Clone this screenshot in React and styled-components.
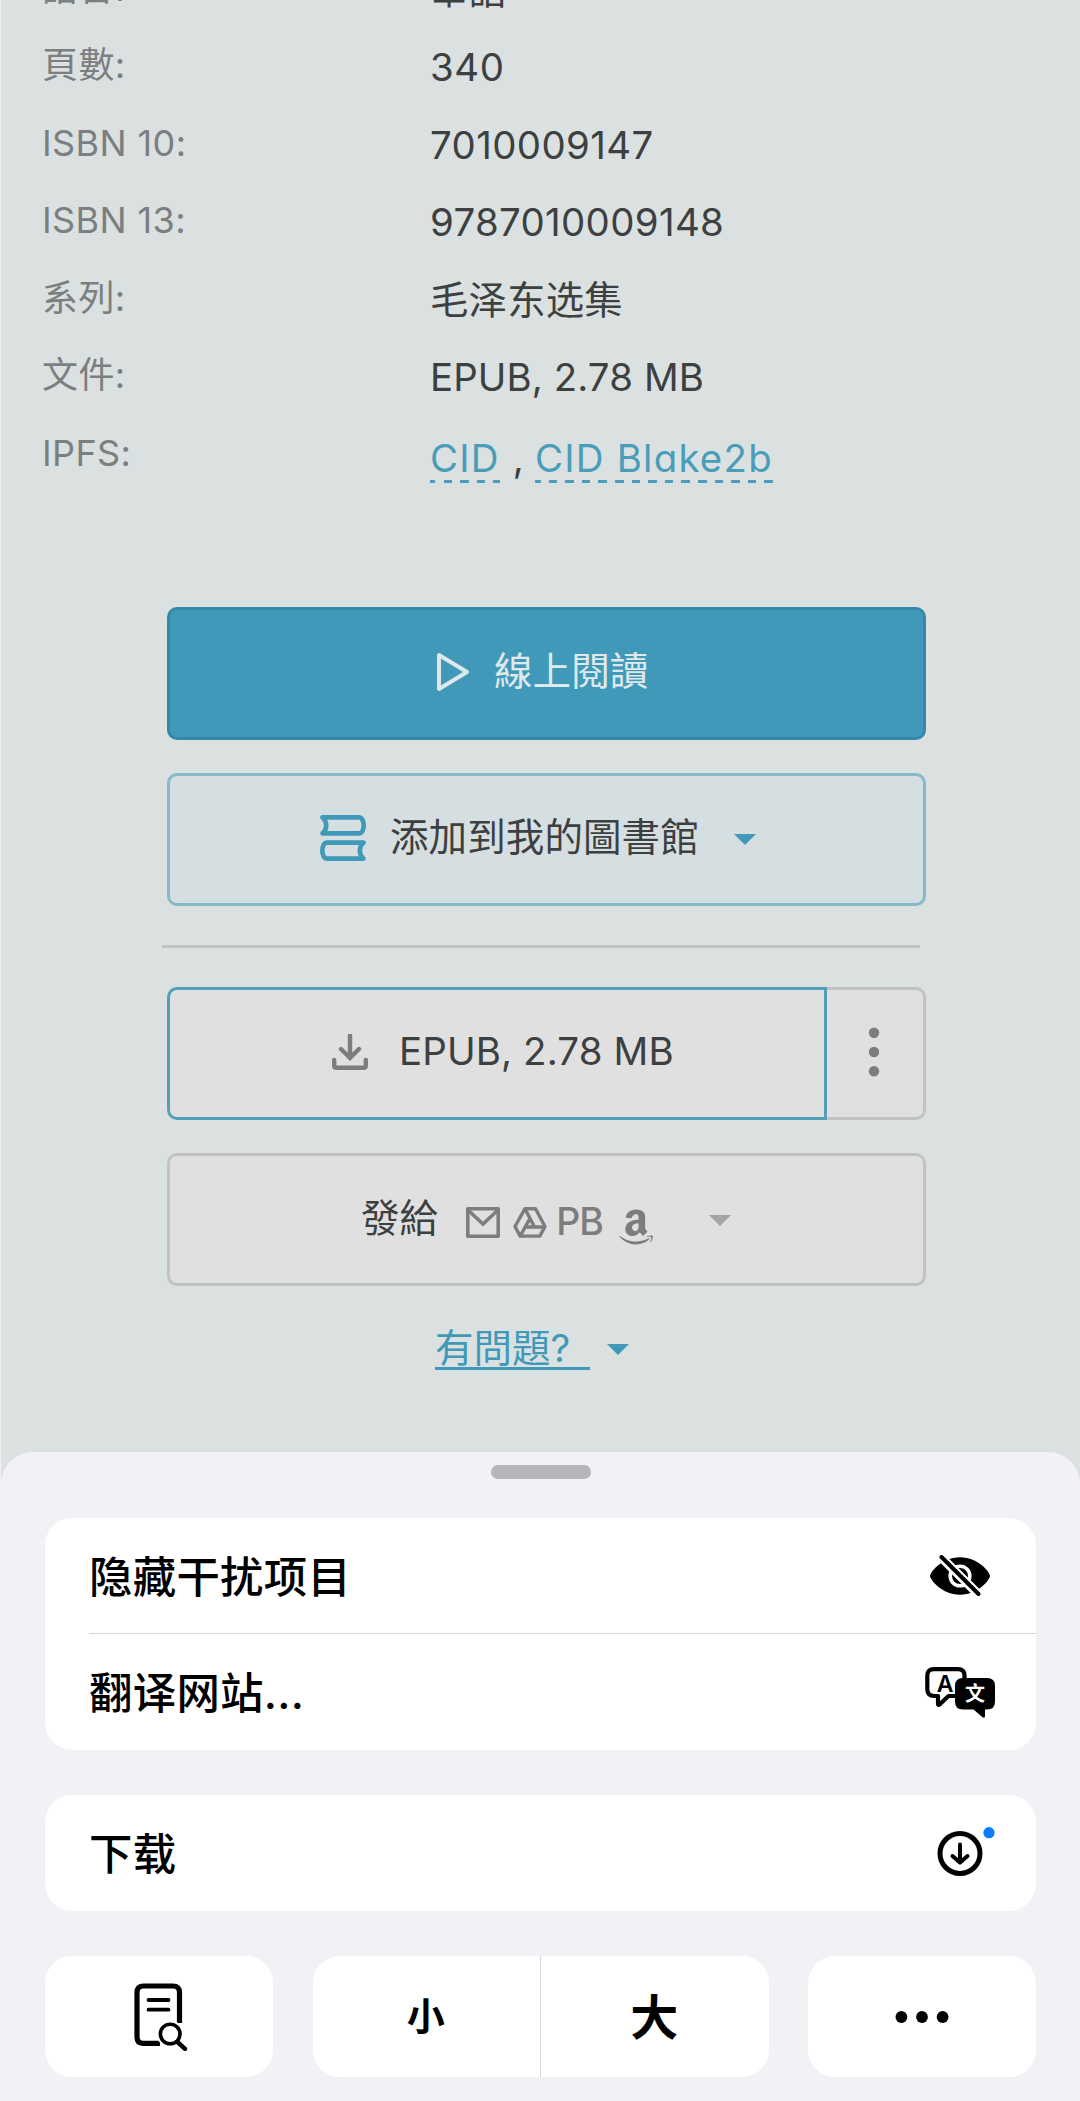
import React from 'react';
import styled, { createGlobalStyle } from 'styled-components';
import { FaAmazon } from 'react-icons/fa';

const GlobalStyle = createGlobalStyle`
  * {
    box-sizing: border-box;
  }
  body {
    margin: 0;
    background-color: #dbe1e1;
    font-family: Inter, "Noto Sans CJK TC", sans-serif;
  }
`;

const PageContainer = styled.div`
  display: flex;
  flex-direction: column;
  width: 1080px;
  height: 2101px;
  overflow: hidden;
  border-left: 1px solid #eef1f1;
  background-color: #dbe1e1;
`;

const BookSection = styled.section`
  height: 1452px;
  flex: none;
  overflow: hidden;
`;

const InfoList = styled.div`
  margin-top: -48.5px;
  padding-left: 41px;
`;

const InfoRow = styled.div`
  display: grid;
  grid-template-columns: 388px 1fr;
  height: 77.6px;
  white-space: nowrap;
`;

const Label = styled.div`
  color: #7b7f7f;
  font-size: 36px;
  line-height: 73px;
  letter-spacing: 0.4px;
`;

const Value = styled.div`
  color: #3d4040;
  font-size: 38.4px;
  line-height: ${(props) => (props.$links ? '82px' : '77.6px')};
  letter-spacing: ${(props) => props.$spacing || '0'};
  font-feature-settings: "cv11";
`;

const DashedLink = styled.a`
  display: inline-block;
  height: 47px;
  line-height: 45px;
  color: #4a9db9;
  letter-spacing: 1.25px;
  background: repeating-linear-gradient(90deg, #4a9db9 0 8.5px, transparent 8.5px 16.6px) -3px 100% / calc(100% + 3px) 3px no-repeat;
`;

const Comma = styled.span`
  margin: 0 11px 0 13px;
`;

const Actions = styled.div`
  display: flex;
  flex-direction: column;
  width: 759px;
  margin: 112.5px 0 0 166px;
`;

const Button = styled.button`
  display: flex;
  align-items: center;
  height: 133px;
  width: 100%;
  margin: 0 0 33px;
  padding: 0 0 3px ${(props) => props.$left};
  border: 3px solid ${(props) => props.$border};
  border-radius: 10px;
  background-color: ${(props) => props.$bg};
  color: ${(props) => props.$color || '#3d4040'};
  font-family: inherit;
  font-size: 38.5px;
  white-space: nowrap;
  svg {
    flex: none;
  }
`;

const ButtonText = styled.span`
  line-height: 50px;
  margin-left: ${(props) => props.$gap || '0'};
  margin-top: ${(props) => props.$top || '-3px'};
  letter-spacing: 0.1px;
`;

const Separator = styled.hr`
  width: 758px;
  height: 3px;
  margin: 6px 0 39px -5px;
  border: none;
  background-color: #c1c5c6;
`;

const SplitButton = styled.div`
  display: flex;
  height: 133px;
  margin-bottom: 33px;
`;

const DownloadButton = styled(Button)`
  width: 660px;
  margin: 0;
  border-radius: 10px 0 0 10px;
`;

const MoreButton = styled(Button)`
  width: 99px;
  margin: 0;
  border-left: none;
  border-radius: 0 10px 10px 0;
`;

const Caret = styled.span`
  width: 0;
  height: 0;
  margin-left: ${(props) => props.$gap};
  margin-top: ${(props) => props.$top || '0'};
  border: 11px solid transparent;
  border-top-color: ${(props) => props.$color || '#4099b8'};
  border-bottom: none;
`;

const SendIcons = styled.span`
  display: flex;
  align-items: flex-start;
  height: 40px;
  gap: 13px;
  margin: 17px 0 0 28px;
  color: #7d7d7d;
`;

const PocketBook = styled.span`
  width: 45px;
  margin: 0 2px 0 -4px;
  font-size: 37.5px;
  font-weight: 500;
  line-height: 29px;
  letter-spacing: -1px;
`;

const Question = styled.div`
  display: flex;
  align-items: center;
  margin: 6px 0 0 268px;
  color: #4099b8;
  font-size: 38.5px;
`;

const QuestionLink = styled.a`
  width: 155px;
  height: 45px;
  line-height: 46px;
  border-bottom: 3px solid #4099b8;
  white-space: nowrap;
`;

const Sheet = styled.section`
  flex: 1;
  display: flex;
  flex-direction: column;
  padding: 13px 44px 0 44px;
  border-radius: 32px 32px 0 0;
  background-color: #f2f1f6;
  color: #000;
  font-family: Inter, "Noto Sans CJK SC", sans-serif;
`;

const Handle = styled.div`
  align-self: center;
  width: 100px;
  height: 14px;
  margin-bottom: 39px;
  border-radius: 7px;
  background-color: #b6b5bb;
`;

const Card = styled.div`
  margin-bottom: 45px;
  border-radius: 27px;
  background-color: #fff;
`;

const MenuRow = styled.div`
  display: flex;
  align-items: center;
  justify-content: space-between;
  height: 116px;
  margin-left: 44px;
  padding-right: ${(props) => props.$right};
  border-bottom: ${(props) => (props.$line ? '1px solid #d6d6d8' : 'none')};
  font-size: 43.4px;
  font-weight: 500;
`;

const MenuText = styled.span`
  padding-bottom: 4px;
  letter-spacing: 0.3px;
`;

const Toolbar = styled.div`
  display: grid;
  grid-template-columns: 228px 456px 228px;
  justify-content: space-between;
  height: 121px;
`;

const ToolButton = styled.div`
  display: flex;
  align-items: center;
  justify-content: center;
  padding-left: ${(props) => props.$nudge || '0'};
  border-radius: 27px;
  background-color: #fff;
`;

const SizeHalf = styled.div`
  display: flex;
  flex: 1;
  height: 100%;
  align-items: center;
  justify-content: center;
  padding: 0 1px 6px 0;
  border-left: ${(props) => (props.$divided ? '1px solid #d6d6d8' : 'none')};
  font-size: ${(props) => props.$size};
  font-weight: 700;
`;

const PlayIcon = () => (
  <svg width="34" height="40" viewBox="0 0 34 40" fill="none" stroke="#dfe9ec" strokeWidth="4" strokeLinejoin="round">
    <path d="M3 3 31 20 3 37Z" />
  </svg>
);

const BooksIcon = () => (
  <svg width="46" height="46" viewBox="0 0 46 46" fill="none" stroke="#4099b8" strokeWidth="4.600" strokeLinejoin="round">
    <path d="M2.500 2.400H39c3 0 4.700 4 4.700 8s-1.700 8-4.700 8H2.500c5-4.500 5-11.500 0-16Z" />
    <path d="M43.500 27.600H7c-3 0-4.700 4-4.700 8s1.700 8 4.700 8h36.500c-5-4.500-5-11.500 0-16Z" />
  </svg>
);

const DownloadIcon = () => (
  <svg width="36" height="36" viewBox="0 0 36 36" fill="none" stroke="#7d7d7d" strokeWidth="4.400">
    <path d="M2.200 26v5.500q0 2.300 2.300 2.300h27q2.300 0 2.300-2.300V26" strokeLinecap="round" />
    <path d="M18 1.500v22M9 15l9 8.800 9-8.800" strokeLinecap="round" />
  </svg>
);

const MailIcon = () => (
  <svg width="34" height="31" viewBox="0 0 34 31" fill="none" stroke="currentColor" strokeWidth="3.600">
    <path d="M1.800 1.800h30.400v27.400H1.800Z" strokeLinejoin="round" />
    <path d="M2 3l15 14L32 3" />
  </svg>
);

const DriveIcon = () => (
  <svg width="34" height="31" viewBox="0 0 34 31" fill="none" stroke="currentColor" strokeWidth="3.400" strokeLinejoin="round">
    <path d="M12 1.700h10.500L32 19.500l-5.200 9.600H7.200L2 19.500Z" />
    <path d="M12 1.700 21.500 20M7.200 29.100 17 11.200M12.300 20H32" />
  </svg>
);

const EyeOffIcon = () => (
  <svg width="60" height="42" viewBox="0 0 60 42" fill="none">
    <path d="M0 21C0 18 11 2.300 30 2.300S60 18 60 21 49 39.700 30 39.700 0 24 0 21Z" fill="#000" />
    <circle cx="30" cy="21" r="9.800" stroke="#fff" strokeWidth="3.600" />
    <path d="M9 0 51 42" stroke="#fff" strokeWidth="9" />
    <path d="M11.500 2 48.500 39" stroke="#000" strokeWidth="4" strokeLinecap="round" />
  </svg>
);

const TranslateIcon = () => (
  <svg width="71" height="51" viewBox="0 0 71 51">
    <path
      d="M9 2.200h24q6.500 0 6.500 6.500V22q0 7-6.500 7H23.500L14.500 37.500q-1.500 1-1.500-.8V29H9q-6.700 0-6.700-7V8.700q0-6.500 6.700-6.500Z"
      fill="#fff"
      stroke="#000"
      strokeWidth="4.200"
      strokeLinejoin="round"
    />
    <text x="20" y="24.500" textAnchor="middle" fontFamily="Inter" fontSize="23" fontWeight="600">A</text>
    <path d="M38 11h24q8 0 8 8v15.500q0 8-8 8h-2v6.500q0 3-2.800 1L48.500 42.500H38q-8 0-8-8V19q0-8 8-8Z" />
    <text x="50" y="33.500" textAnchor="middle" fontFamily="Noto Sans CJK SC" fontSize="20" fontWeight="700" fill="#fff">文</text>
  </svg>
);

const DownloadsIcon = () => (
  <svg width="58" height="52" viewBox="0 0 58 52" fill="none" stroke="#000" strokeLinecap="round" strokeLinejoin="round">
    <circle cx="23" cy="26.500" r="20" strokeWidth="5" />
    <path d="M23 17.500v17.500M15.500 29 23 35.500l7.500-6.500" strokeWidth="4" />
    <circle cx="52" cy="5.700" r="5.600" fill="#0a7aff" stroke="none" />
  </svg>
);

const FindIcon = () => (
  <svg width="54" height="68" viewBox="0 0 54 68" fill="none" stroke="#000" strokeLinecap="round">
    <path d="M45.500 40V9.500q0-6.500-6.500-6.500H9.500Q3 3 3 9.500v44.500Q3 60.300 9 60.300h17" strokeWidth="5.200" strokeLinecap="butt" />
    <path d="M14.500 17h20M14.500 26.700h20" strokeWidth="3.800" />
    <circle cx="36.200" cy="51" r="13.500" fill="#fff" stroke="none" />
    <circle cx="36.200" cy="51" r="9.800" strokeWidth="3.600" />
    <path d="M43.500 59 51 65.800" strokeWidth="4.400" />
  </svg>
);

const Dots = ({ vertical, color, r, step }) => (
  <svg width={vertical ? 12 : 54} height={vertical ? 50 : 12} fill={color}>
    {[-1, 0, 1].map((n) => (
      <circle key={n} cx={vertical ? 6 : 27 + n * step} cy={vertical ? 25 + n * step : 6} r={r} />
    ))}
  </svg>
);

const details = [
  { label: '語言:', value: '華語' },
  { label: '頁數:', value: '340', spacing: '0.6px' },
  { label: 'ISBN 10:', value: '7010009147', spacing: '0.4px' },
  { label: 'ISBN 13:', value: '9787010009148', spacing: '0.35px' },
  { label: '系列:', value: '毛泽东选集', spacing: '0.2px' },
  { label: '文件:', value: 'EPUB, 2.78 MB', spacing: '0.1px' },
];

function App() {
  return (
    <>
      <GlobalStyle />
      <PageContainer>
        <BookSection>
          <InfoList>
            {details.map((item) => (
              <InfoRow key={item.label}>
                <Label>{item.label}</Label>
                <Value $spacing={item.spacing}>{item.value}</Value>
              </InfoRow>
            ))}
            <InfoRow>
              <Label>IPFS:</Label>
              <Value $links>
                <DashedLink>CID</DashedLink>
                <Comma>,</Comma>
                <DashedLink>CID Blake2b</DashedLink>
              </Value>
            </InfoRow>
          </InfoList>
          <Actions>
            <Button $left="266px" $bg="#4099b8" $border="#3389a7" $color="#dfe9ec">
              <PlayIcon />
              <ButtonText $gap="24px">線上閱讀</ButtonText>
            </Button>
            <Button $left="150px" $bg="#d5dfe1" $border="#86b9c9">
              <BooksIcon />
              <ButtonText $gap="24px">添加到我的圖書館</ButtonText>
              <Caret $gap="35px" $top="2px" />
            </Button>
            <Separator />
            <SplitButton>
              <DownloadButton $left="162px" $bg="#e0e0e0" $border="#529fb9">
                <DownloadIcon />
                <ButtonText $gap="31px">EPUB, 2.78 MB</ButtonText>
              </DownloadButton>
              <MoreButton $left="41px" $bg="#e0e0e0" $border="#c0c2c3">
                <Dots vertical color="#7d7d7d" r={5.2} step={19.3} />
              </MoreButton>
            </SplitButton>
            <Button $left="191px" $bg="#e0e0e0" $border="#c0c2c3">
              <ButtonText $top="-1px">發給</ButtonText>
              <SendIcons>
                <MailIcon />
                <DriveIcon />
                <PocketBook>PB</PocketBook>
                <FaAmazon size={40} />
              </SendIcons>
              <Caret $gap="53px" $color="#a5a5a5" $top="5px" />
            </Button>
            <Question>
              <QuestionLink>有問題?</QuestionLink>
              <Caret $gap="17px" $top="3px" />
            </Question>
          </Actions>
        </BookSection>
        <Sheet>
          <Handle />
          <Card>
            <MenuRow $line $right="46px">
              <MenuText>隐藏干扰项目</MenuText>
              <EyeOffIcon />
            </MenuRow>
            <MenuRow $right="40px">
              <MenuText>翻译网站...</MenuText>
              <TranslateIcon />
            </MenuRow>
          </Card>
          <Card>
            <MenuRow $right="41px">
              <MenuText>下载</MenuText>
              <DownloadsIcon />
            </MenuRow>
          </Card>
          <Toolbar>
            <ToolButton $nudge="3px">
              <FindIcon />
            </ToolButton>
            <ToolButton>
              <SizeHalf $size="38px">小</SizeHalf>
              <SizeHalf $divided $size="48px">大</SizeHalf>
            </ToolButton>
            <ToolButton>
              <Dots color="#000" r={5.9} step={20.6} />
            </ToolButton>
          </Toolbar>
        </Sheet>
      </PageContainer>
    </>
  );
}

export default App;
